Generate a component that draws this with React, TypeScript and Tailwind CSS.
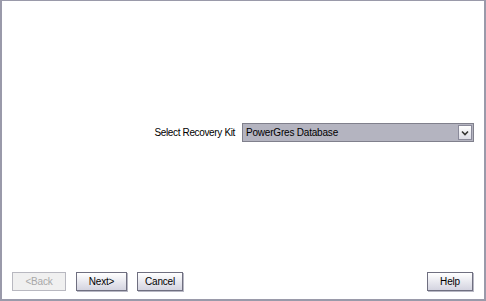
export default function App() {
  const btn =
    "h-[19px] border border-[#6f6f80] bg-gradient-to-b from-[#ffffff] to-[#d4d4e0] text-[10px] tracking-[-0.2px] leading-none text-black shadow-[1px_1px_0_#b8b8c4] flex items-center justify-center";
  return (
    <div
      className="w-[486px] h-[301px] bg-white border-l-2 border-t border-r-2 border-b-2 border-[#9a9aaa] flex flex-col"
      style={{ fontFamily: '"Liberation Sans", Arial, sans-serif' }}
    >
      <div className="mt-[122px] flex items-center justify-end pr-[10px]">
        <span className="text-[10px] tracking-[-0.35px] text-black mr-[7px]">Select Recovery Kit</span>
        <div className="w-[232px] h-[19px] border border-[#80808c] bg-[#b4b4c0] flex items-center">
          <span className="flex-1 pl-[3px] text-[10px] tracking-[-0.2px] text-black">PowerGres Database</span>
          <div className="w-[14px] h-[15px] mr-[1px] border border-[#8a8a9a] bg-gradient-to-b from-white to-[#dcdce6] flex items-center justify-center">
            <svg width="8" height="6" viewBox="0 0 8 6">
              <path d="M1 1.5 L4 4.5 L7 1.5" stroke="#333" strokeWidth="1.6" fill="none" />
            </svg>
          </div>
        </div>
      </div>
      <div className="mt-auto mb-[8px] flex items-center pl-[10px] pr-[11px]">
        <div className="w-[54px] h-[19px] border border-[#b8b8c0] bg-[#f0f0f0] text-[10px] tracking-[-0.2px] leading-none text-[#a8a8a8] flex items-center justify-center">
          &lt;Back
        </div>
        <div className={`${btn} w-[51px] ml-[10px]`}>Next&gt;</div>
        <div className={`${btn} w-[46px] ml-[10px]`}>Cancel</div>
        <div className={`${btn} w-[46px] ml-auto`}>Help</div>
      </div>
    </div>
  );
}
